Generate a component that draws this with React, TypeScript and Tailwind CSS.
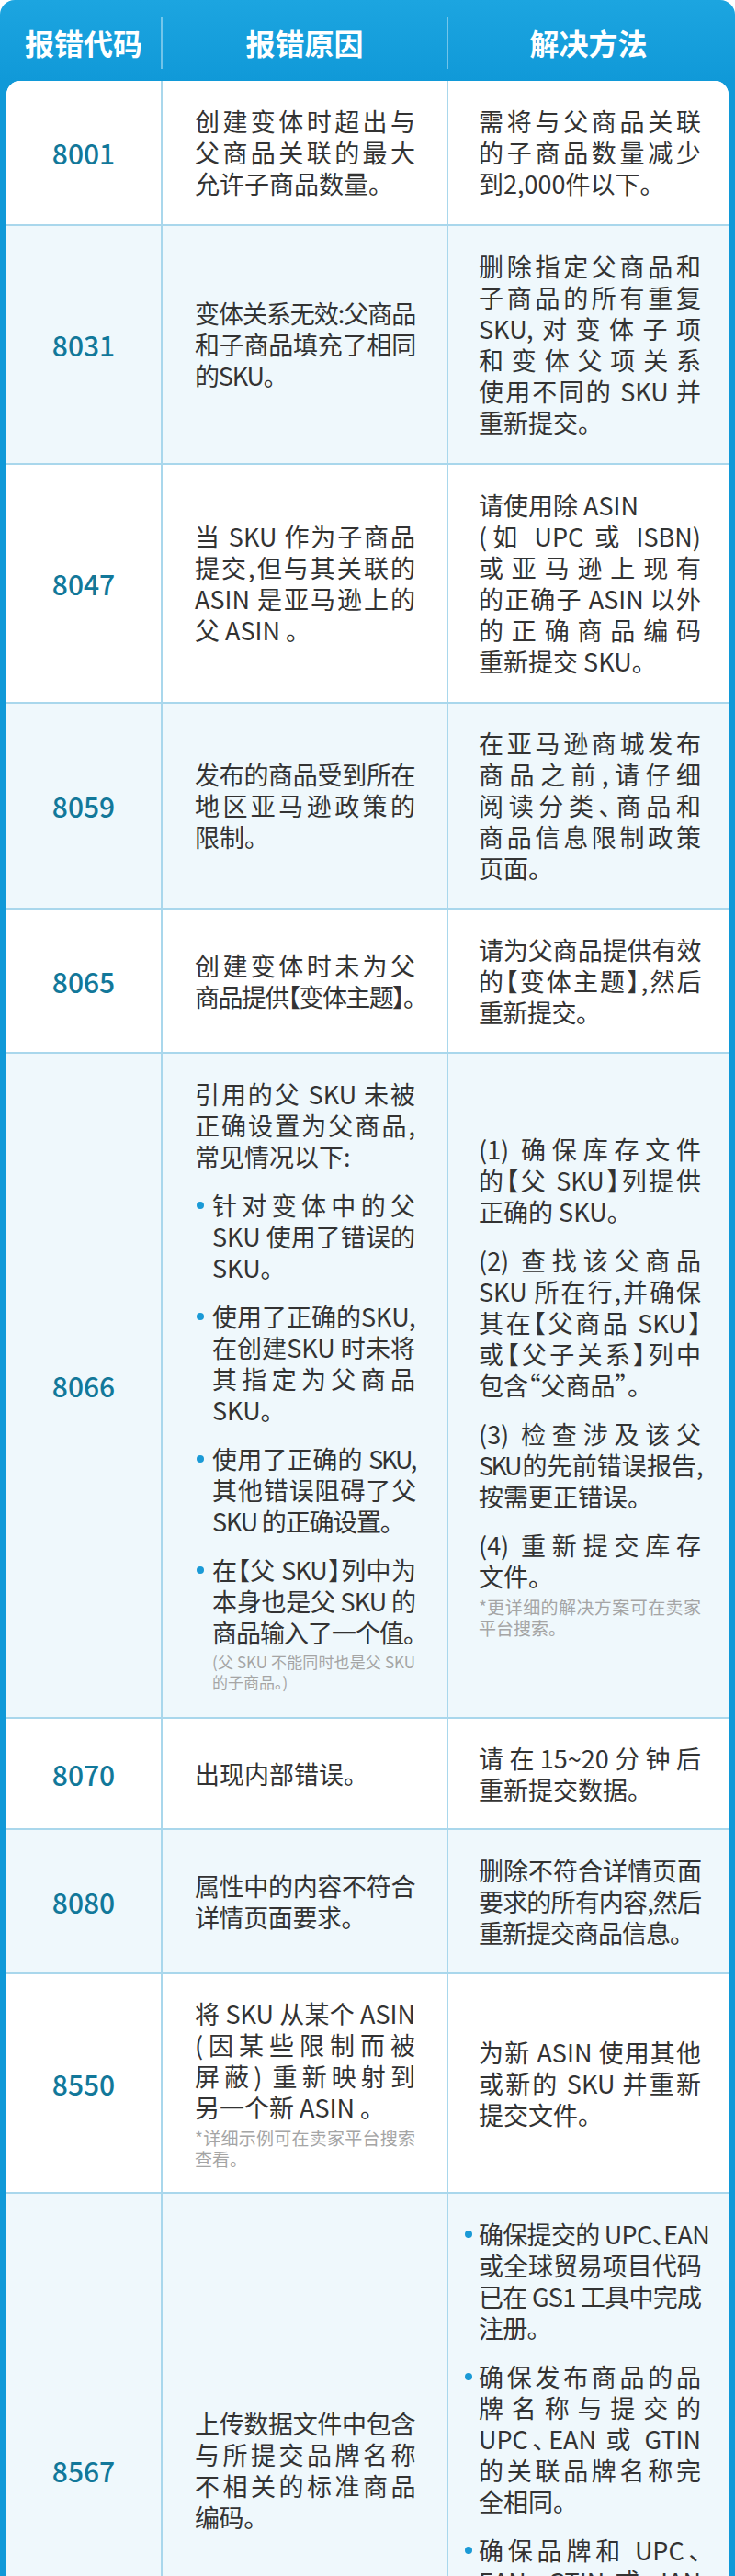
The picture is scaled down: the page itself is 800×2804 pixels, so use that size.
import React from 'react';

type Line = string | [string, string];

const line = "border-[#a9d7ec]";

// one paragraph, each visual line given explicitly so breaks match the artwork
function P({ lines, className = '', left = [] }: { lines: Line[]; className?: string; left?: number[] }) {
  return (
    <div className={className}>
      {lines.map((l, i) => {
        const [text, cls] = typeof l === 'string' ? [l, ''] : l;
        const justify = i < lines.length - 1 && !left.includes(i);
        return (
          <div key={i} className={`whitespace-nowrap ${justify ? '[text-align-last:justify]' : ''} ${cls}`}>
            {text}
          </div>
        );
      })}
    </div>
  );
}

function Note({ lines, className = 'text-[19px] leading-[23px]' }: { lines: string[]; className?: string }) {
  return <P lines={lines} className={`mt-1 text-[#a5a5a5] ${className}`} />;
}

function Li({ children, hang = false }: { children: React.ReactNode; hang?: boolean }) {
  return (
    <div className={`flex ${hang ? '-ml-[17px]' : ''}`}>
      <div className={`${hang ? 'w-[17px]' : 'w-[19px]'} shrink-0`}>
        <div className="ml-[2px] mt-[13px] h-[8px] w-[8px] rounded-full bg-[#1a9ad6]" />
      </div>
      <div className="min-w-0 flex-1">{children}</div>
    </div>
  );
}

function Row({
  code,
  alt,
  pad = 'py-[27px]',
  reason,
  fix,
}: {
  code: string;
  alt?: boolean;
  pad?: string;
  reason: React.ReactNode;
  fix: React.ReactNode;
}) {
  return (
    <div className={`grid grid-cols-[170px_311px_305px] border-b-2 ${line} ${alt ? 'bg-[#eff8fc]' : 'bg-white'}`}>
      <div className={`flex items-center justify-center border-r-2 ${line} text-[30px] font-medium text-[#12789a]`}>
        {code}
      </div>
      <div className={`flex items-center border-r-2 ${line} ${pad} pl-[35px]`}>
        <div className="w-[240px]">{reason}</div>
      </div>
      <div className={`flex items-center ${pad} pl-[33px]`}>
        <div className="w-[242px]">{fix}</div>
      </div>
    </div>
  );
}

export default function App() {
  return (
    <div className="h-[2804px] w-[800px] overflow-hidden bg-white font-['Noto_Sans_CJK_SC','Noto_Sans',sans-serif]">
      {/* Header */}
      <div className="flex h-[88px] items-center rounded-t-[16px] bg-linear-to-b from-[#1ca5e0] to-[#1099d8] px-[7px] pt-1 text-[32px] font-bold text-white">
        <div className="w-[168px] text-center">报错代码</div>
        <div className="h-[57px] w-[2px] bg-white/40" />
        <div className="w-[309px] text-center">报错原因</div>
        <div className="h-[57px] w-[2px] bg-white/40" />
        <div className="w-[305px] text-center">解决方法</div>
      </div>

      {/* Table */}
      <div className="bg-[#1099d8] px-[7px]">
        <div className="overflow-hidden rounded-t-[15px] bg-white text-[27px] leading-[34px] text-[#333333] [font-feature-settings:'halt']">
          <Row
            code="8001"
            reason={<P lines={['创建变体时超出与', '父商品关联的最大', '允许子商品数量。']} />}
            fix={<P lines={['需将与父商品关联', '的子商品数量减少', '到2,000件以下。']} />}
          />
          <Row
            code="8031"
            alt
            reason={<P className="tracking-[-1.2px]" lines={['变体关系无效:父商品', '和子商品填充了相同', '的SKU。']} />}
            fix={
              <P
                lines={['删除指定父商品和', '子商品的所有重复', 'SKU,对变体子项', '和变体父项关系', '使用不同的 SKU 并', '重新提交。']}
              />
            }
          />
          <Row
            code="8047"
            reason={<P lines={['当 SKU 作为子商品', '提交,但与其关联的', 'ASIN 是亚马逊上的', '父 ASIN 。']} />}
            fix={
              <P
                left={[0]}
                lines={['请使用除 ASIN', '(如 UPC 或 ISBN)', '或亚马逊上现有', '的正确子 ASIN 以外', '的正确商品编码', '重新提交 SKU。']}
              />
            }
          />
          <Row
            code="8059"
            alt
            pad="py-[26px]"
            reason={<P lines={[['发布的商品受到所在', 'tracking-[-0.6px]'], '地区亚马逊政策的', '限制。']} />}
            fix={<P lines={['在亚马逊商城发布', '商品之前,请仔细', '阅读分类、商品和', '商品信息限制政策', '页面。']} />}
          />
          <Row
            code="8065"
            pad="py-[26.5px]"
            reason={<P lines={['创建变体时未为父', ['商品提供【变体主题】。', 'tracking-[-1.6px]']]} />}
            fix={<P className="tracking-[-0.5px]" lines={['请为父商品提供有效', '的【变体主题】,然后', '重新提交。']} />}
          />
          <Row
            code="8066"
            alt
            reason={
              <div className="flex flex-col gap-[19px]">
                <P lines={['引用的父 SKU 未被', '正确设置为父商品,', '常见情况以下:']} />
                <Li>
                  <P lines={['针对变体中的父', 'SKU 使用了错误的', 'SKU。']} />
                </Li>
                <Li>
                  <P lines={['使用了正确的SKU,', '在创建SKU 时未将', '其指定为父商品', 'SKU。']} />
                </Li>
                <Li>
                  <P className="tracking-[-1.2px]" lines={[['使用了正确的 SKU,', 'tracking-[-2.2px]'], '其他错误阻碍了父', 'SKU 的正确设置。']} />
                </Li>
                <Li>
                  <P className="tracking-[-1px]" lines={['在【父 SKU】列中为', '本身也是父 SKU 的', '商品输入了一个值。']} />
                  <Note className="text-[17px] leading-[22px]" lines={['(父 SKU 不能同时也是父 SKU', '的子商品。)']} />
                </Li>
              </div>
            }
            fix={
              <div className="flex flex-col gap-[19px]">
                <P lines={['(1) 确保库存文件', '的【父 SKU】列提供', '正确的 SKU。']} />
                <P lines={['(2) 查找该父商品', 'SKU 所在行,并确保', '其在【父商品 SKU】', '或【父子关系】列中', '包含“父商品”。']} />
                <P lines={['(3) 检查涉及该父', ['SKU的先前错误报告,', 'tracking-[-2.6px]'], '按需更正错误。']} />
                <div>
                  <P lines={['(4) 重新提交库存', '文件。']} />
                  <Note lines={['*更详细的解决方案可在卖家', '平台搜索。']} />
                </div>
              </div>
            }
          />
          <Row
            code="8070"
            pad="py-[25.5px]"
            reason={<P lines={['出现内部错误。']} />}
            fix={<P lines={['请在15~20分钟后', '重新提交数据。']} />}
          />
          <Row
            code="8080"
            alt
            pad="py-[26.5px]"
            reason={<P className="tracking-[-0.4px]" lines={['属性中的内容不符合', '详情页面要求。']} />}
            fix={<P className="tracking-[-1px]" lines={['删除不符合详情页面', '要求的所有内容,然后', '重新提交商品信息。']} />}
          />
          <Row
            code="8550"
            pad="py-[25.5px]"
            reason={
              <div>
                <P lines={['将 SKU 从某个 ASIN', '(因某些限制而被', '屏蔽) 重新映射到', '另一个新 ASIN 。']} />
                <Note lines={['*详细示例可在卖家平台搜索', '查看。']} />
              </div>
            }
            fix={<P lines={['为新 ASIN 使用其他', '或新的 SKU 并重新', '提交文件。']} />}
          />
          <Row
            code="8567"
            alt
            reason={<P className="tracking-[-0.4px]" lines={['上传数据文件中包含', '与所提交品牌名称', '不相关的标准商品', '编码。']} />}
            fix={
              <div className="flex flex-col gap-[19px]">
                <Li hang>
                  <P className="tracking-[-0.7px]" lines={['确保提交的 UPC、EAN', '或全球贸易项目代码', '已在 GS1 工具中完成', '注册。']} />
                </Li>
                <Li hang>
                  <P lines={['确保发布商品的品', '牌名称与提交的', 'UPC、EAN 或 GTIN', '的关联品牌名称完', '全相同。']} />
                </Li>
                <Li hang>
                  <P lines={['确保品牌和 UPC、', 'EAN、GTIN 或 JAN', '代码之间的关联已', '在 GS1 数据库中', '正确登记并保持', '一致。']} />
                </Li>
              </div>
            }
          />
        </div>
      </div>
    </div>
  );
}
